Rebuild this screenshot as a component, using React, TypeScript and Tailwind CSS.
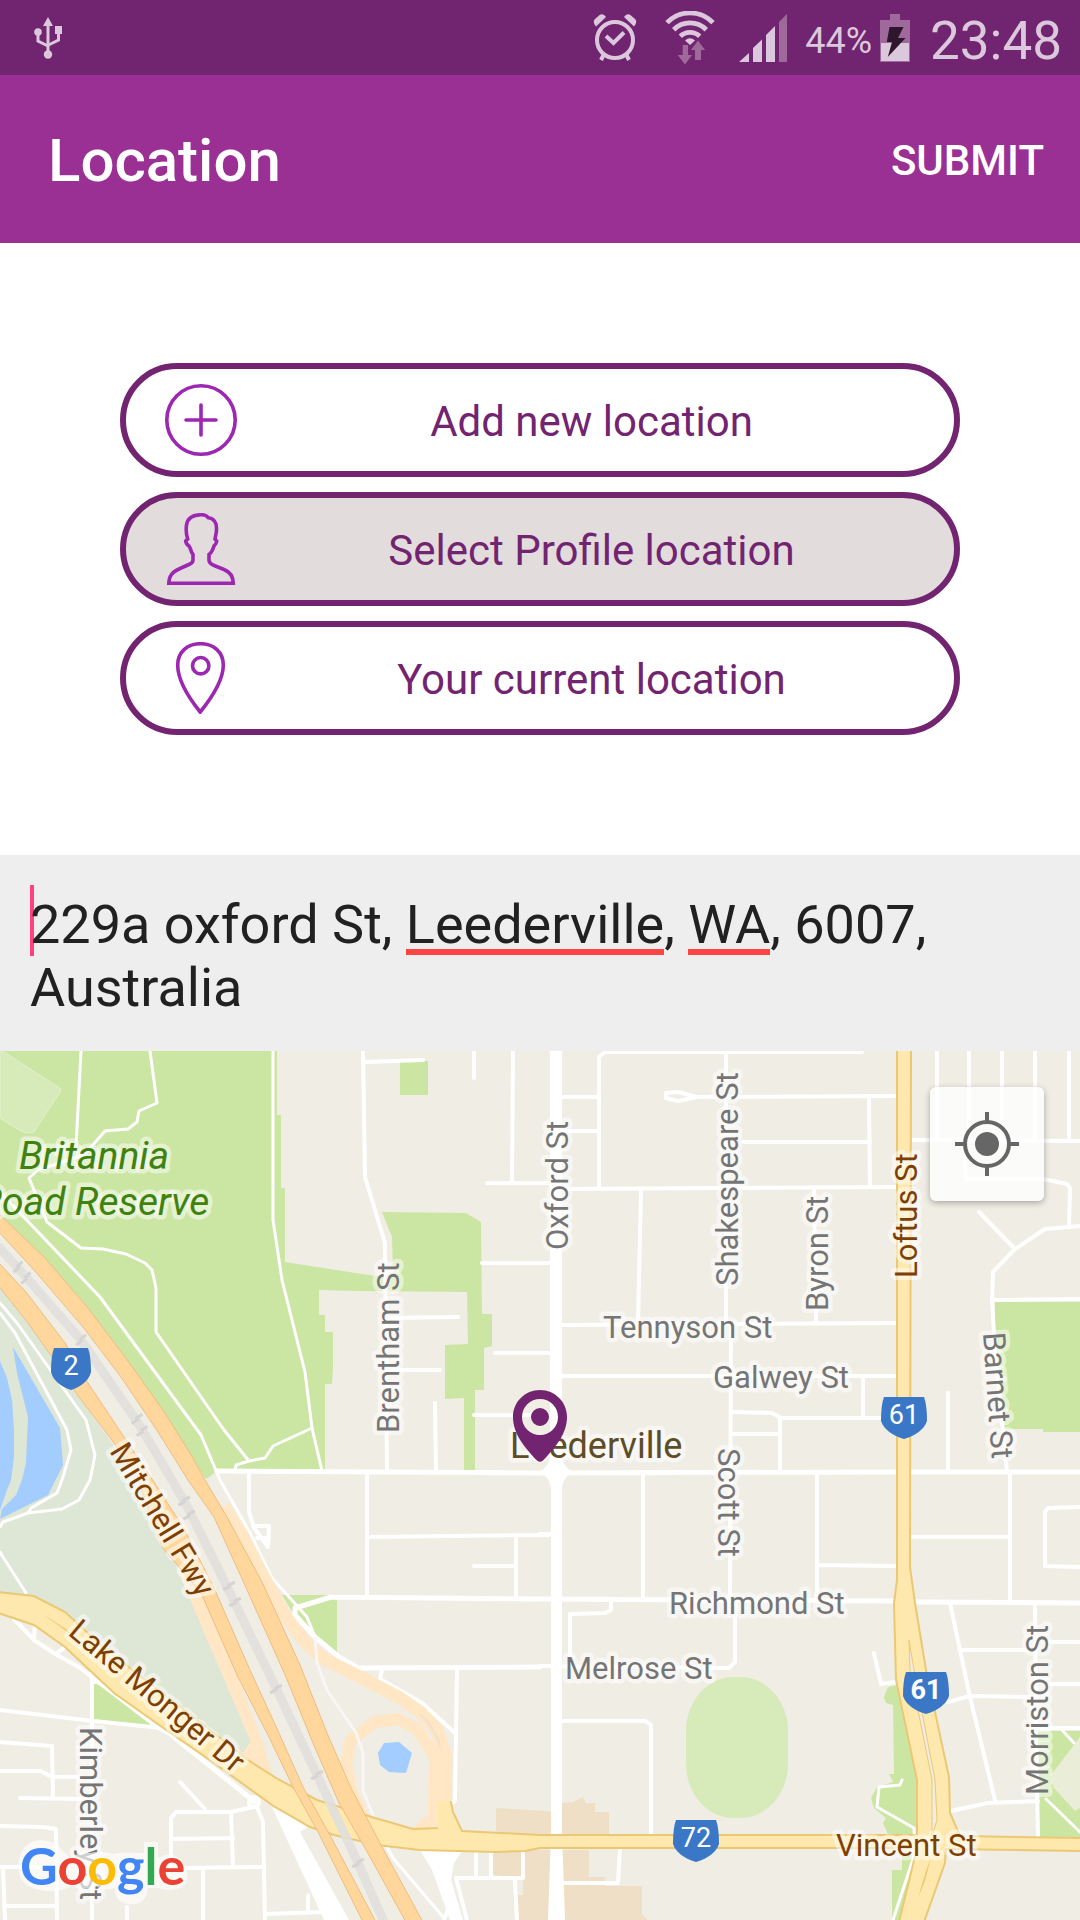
import React, { useLayoutEffect, useRef, useState } from "react";

const ADDRESS = "229a oxford St, Leederville, WA, 6007, Australia";

/* ---------- status bar ---------- */

function UsbIcon() {
  return (
    <svg width="28" height="42" viewBox="0 0 28 42" fill="currentColor" aria-hidden="true">
      <path d="M14 0l5 9h-3.500v26h-3V9H9z" />
      <circle cx="14" cy="37.500" r="4.200" />
      <circle cx="4" cy="15" r="3.800" />
      <path d="M21 9h7v8h-7z" />
      <path d="M4 16v8l10 5M24.500 16v7l-10 5" fill="none" stroke="currentColor" strokeWidth="3" />
    </svg>
  );
}

function AlarmIcon() {
  return (
    <svg width="44" height="47" viewBox="0 0 44 47" fill="none" stroke="currentColor" aria-hidden="true">
      <circle cx="22" cy="26" r="18" strokeWidth="4" />
      <path d="M13 22l7.500 7L31 18.500" strokeWidth="4" />
      <path d="M11 40l-3 6M33 40l3 6" strokeWidth="4" />
      <path
        d="M3 12.500Q-1 8 2 5L6 1.500Q10-1.500 13 3zM41 12.500Q45 8 42 5L38 1.500Q34-1.500 31 3z"
        fill="currentColor"
        stroke="none"
      />
    </svg>
  );
}

function WifiIcon() {
  return (
    <svg width="50" height="54" viewBox="0 0 50 54" fill="none" stroke="currentColor" aria-hidden="true">
      <path d="M2 11.700A32 32 0 0 1 48 11.700" strokeWidth="4.800" />
      <path d="M8.700 18.700A23 23 0 0 1 41.300 18.700" strokeWidth="4.800" />
      <path d="M15.300 25.300A14 14 0 0 1 34.700 25.300" strokeWidth="4.800" />
      <path d="M25 34l-5-4.500Q25 25 30 29.500z" fill="currentColor" stroke="none" />
      <g fill="#a0699c" stroke="none">
        <path d="M17.700 34H23v10h4l-7 9.500L12.700 44h5z" />
        <path d="M30 49V39h-4l7-9.500L40 39h-4v10z" />
      </g>
    </svg>
  );
}

function SignalIcon() {
  return (
    <svg width="48" height="48" viewBox="0 0 48 48" fill="currentColor" aria-hidden="true">
      <path d="M0 48l10-9v9zM14 34l9-8.500V48h-9zM27 21l9-9v36h-9z" />
      <path d="M40 8l8-8v48h-8z" fill="#a0699c" />
    </svg>
  );
}

function BatteryIcon() {
  return (
    <svg width="30" height="48" viewBox="0 0 30 48" aria-hidden="true">
      <path d="M10 0h10v6h10v42H0V6h10z" fill="#a0699c" />
      <path d="M1 29h28v18H1z" fill="#dcc8dc" />
      <path d="M9.500 13h14L18 24h7.500L7.800 43 12 28H6.800z" fill="#2e162d" />
    </svg>
  );
}

function StatusBar() {
  return (
    <div className="flex h-[75px] items-center bg-[#71246f] pl-[34px] pr-[18px] text-[#dcc8dc]">
      <UsbIcon />
      <div className="ml-auto flex items-center">
        <AlarmIcon />
        <span className="ml-7">
          <WifiIcon />
        </span>
        <span className="ml-6">
          <SignalIcon />
        </span>
        <span className="ml-[18px] pt-1.5 text-[36px] leading-none">44%</span>
        <span className="ml-2">
          <BatteryIcon />
        </span>
        <span className="ml-5 pt-2 text-[53px] leading-none">23:48</span>
      </div>
    </div>
  );
}

/* ---------- location choices ---------- */

function PlusIcon() {
  return (
    <>
      <circle cx="36" cy="36" r="34.200" />
      <path d="M36 21v30M21 36h30" />
    </>
  );
}

function PersonIcon() {
  return (
    <path
      strokeLinejoin="miter"
      d="M3.800 70.300C4 63 7 59 15 55.500L25 51Q28 49.500 28 47V41.500Q26.500 40 25.500 36L24 33Q21 31 20.700 28L22.700 26Q20.500 20 21.500 12Q23 2 36 1.700Q41 1.500 43.500 4.800Q49 5.500 51 11Q52 16 51 21L50 26L51.700 28Q51.500 31 49 33L47.500 37Q46 40 44 41.500V47Q44 50 48 52L59 56.500Q68 60 68.300 70.300Z"
    />
  );
}

function PinOutlineIcon() {
  return (
    <>
      <path d="M35.500 1.700C49 1.700 58.300 10.500 58.300 23C58.300 36 49 53 35.200 70C21.500 53 12.700 36 12.700 23C12.700 10.500 22 1.700 35.500 1.700Z" />
      <circle cx="35.700" cy="23.700" r="8.200" />
    </>
  );
}

const CHOICES = [
  { id: "new", label: "Add new location", Icon: PlusIcon },
  { id: "profile", label: "Select Profile location", Icon: PersonIcon },
  { id: "current", label: "Your current location", Icon: PinOutlineIcon },
];

function Choices() {
  const [selected, setSelected] = useState("profile");
  return (
    <div className="flex flex-col gap-[15px] bg-white p-[120px]">
      {CHOICES.map(({ id, label, Icon }) => (
        <button
          key={id}
          type="button"
          aria-pressed={selected === id}
          onClick={() => setSelected(id)}
          className="flex h-[114px] w-full items-center rounded-full border-6 border-[#732471] bg-white pl-[39px] pr-2 text-[42px] leading-none text-[#732471] aria-pressed:bg-[#e2dcdc]"
        >
          <svg
            width="72"
            height="72"
            viewBox="0 0 72 72"
            fill="none"
            stroke="#9c27b0"
            strokeWidth="3.600"
            strokeLinecap="round"
            aria-hidden="true"
          >
            <Icon />
          </svg>
          <span className="flex-1 pt-1">{label}</span>
        </button>
      ))}
    </div>
  );
}

/* ---------- address field ---------- */

const UNKNOWN_WORDS = ["Leederville", "WA"];

type Mark = { left: number; width: number };

/* Finds where the unknown words of the first line lie, from the field's own font. */
function measureMarks(field: HTMLTextAreaElement, value: string): Mark[] {
  const context = document.createElement("canvas").getContext("2d");
  if (!context) return [];
  const style = getComputedStyle(field);
  context.font = `${style.fontSize} ${style.fontFamily}`;
  return UNKNOWN_WORDS.flatMap((word) => {
    const at = value.indexOf(word);
    if (at < 0) return [];
    const left = context.measureText(value.slice(0, at)).width;
    const width = context.measureText(word).width;
    return left + width <= field.clientWidth ? [{ left, width }] : [];
  });
}

function AddressField() {
  const [value, setValue] = useState(ADDRESS);
  const [marks, setMarks] = useState<Mark[]>([]);
  const field = useRef<HTMLTextAreaElement>(null);

  useLayoutEffect(() => {
    if (field.current) setMarks(measureMarks(field.current, value));
  }, [value]);

  return (
    <div className="bg-[#eeeeee] px-[30px] pb-8 pt-[38px]">
      <div className="relative">
        <span className="absolute -top-2 left-0 h-[71px] w-1 bg-[#ff4081]" />
        {marks.map((mark) => (
          <span
            key={mark.left}
            className="absolute top-14 h-1.5 bg-[#ff4444]"
            style={{ left: mark.left, width: mark.width }}
          />
        ))}
        <textarea
          ref={field}
          aria-label="Address"
          rows={2}
          spellCheck={false}
          value={value}
          onChange={(e) => setValue(e.target.value)}
          className="relative block w-full resize-none overflow-hidden bg-transparent p-0 text-[54px] leading-[63px] text-[#212121] caret-[#ff4081] outline-none"
        />
      </div>
    </div>
  );
}

/* ---------- map ---------- */

const MINOR_STREETS = [
  "M363 0L365 126L385 192L387 421M365 11L423 9M474 0V27M513 0L512 132M487 132H556M482 212H556",
  "M387 267L458 266M387 319H440M435 352L436 421M495 302H556M474 364H556",
  "M599 136V6L605 1H862M562 46H599M562 80H599M726 0V272M731 272L730 547L735 549V611L729 617L540 615",
  "M697 46L678 41L666 42V47L678 50ZM697 46L897 45M743 91H870M869 48L870 136M540 132H556M562 138L897 136",
  "M641 139L638 274M814 137L816 272M562 274L897 272M562 325H897M863 326V366",
  "M731 361L772 362L781 367H881M780 367V421M731 383H780",
  "M937 0V89M969 0V89M1002 0V89M1035 0V89M1069 0V89M910 89L1080 90",
  "M963 89L966 128H1043L1067 133L1070 137L1069 175M979 161L1015 198M1080 175L1045 178L1015 198L993 221L992 249L995 300L1007 421M993 249L1080 248M948 342V421",
  "M643 422V547M817 422V547M817 514L896 515M910 486H1009M1010 422V551M1080 456L1048 457L1045 461V515L1080 516M540 483H552",
  "M611 548V559L605 562L570 563V615M950 552L970 646L995 749M962 599H1035M1035 552L1036 677L1038 786M1050 591H1080M1050 633H1080M1036 677H1080",
  "M948 651L970 645L1035 646M951 760L988 752L1038 750M874 602L881 633L896 631M562 670H645L651 674V783M620 797L618 832H565",
  "M249 422V461L254 477L268 496L269 475H254M257 487H269M367 422V545M369 486L540 484M516 486V547M474 515H516M540 484H552",
  "M14 568L34 589L57 604L79 616L93 627L157 676M35 574L34 587M57 602L64 597M92 621V869M0 659L93 670L162 677M92 631H106",
  "M0 691L52 695L53 747M0 720H41L52 726H79M20 747L84 748M0 775L43 776L56 778L57 869M0 816H57M3 816L5 869M4 855H57M127 856V869",
  "M180 731L205 758M253 756L231 761H176L171 767V817M257 756L263 771L265 869M231 761L233 816M171 788L233 787M183 817L263 816M203 819V869M265 863L324 861M308 844V862",
  "M456 827H523V801M476 801V827M491 801V827M515 829L517 869M456 827L467 869M444 869L451 850M457 617L455 749L452 752M382 619L380 628L422 652L455 682",
];

const MAIN_STREETS = [
  "M217 420L540 422L897 421M910 421H1080M540 548L893 550M915 551L1080 552",
  "M331 546L540 548M331 546L305 554L295 557V564L315 586L339 606L358 617L540 616M157 676L169 682L255 751",
];

const PATHS = [
  "M81 0L76 96M150 0L157 52L139 60L137 71L128 78L105 80L84 104L38 119L29 127L47 171L81 197L103 198L126 203L145 212L152 219L156 237V281L224 379L249 410L265 407L273 395L312 377M235 420L236 414L249 410",
  "M0 141L100 246L201 384L220 429L250 482L272 527L307 566L315 586M273 0V169L282 229L305 321L312 377L322 420",
  "M0 252L17 272L86 369L95 404L90 429L79 449L62 458L28 462L3 471L0 476M0 262L15 282L67 379L71 399L62 429L57 442L31 457L28 462M0 501L3 506L26 542",
  "M387 796L393 807L444 867M902 729L900 734L879 736L877 756L914 777L915 802L893 869M1062 679L1074 692M1046 748L1080 781",
];

const WEST_LANES =
  "M-2 211L26 241L65 292L86 329L114 371L152 428L183 476L214 537L250 619L279 682L303 736L331 786L376 871H363L317 779L293 736L269 686L238 626L201 542L162 496L138 429L114 392L79 346L52 306L28 272L-2 234Z";
const EAST_LANES =
  "M-2 162L45 207L88 257L131 314L165 362L193 407L205 429L227 466L262 531L300 614L327 682L351 737L382 796L423 871H406L365 797L339 752L313 692L286 626L248 541L214 466L188 429L158 381L121 326L83 276L34 219L-2 180Z";
const LAKE_MONGER =
  "M-2 541L34 545L65 561L103 596L162 642L214 682L248 709L276 727L317 749L375 767L413 778L439 777V751H451L453 761L462 780L540 784H918V797H540L525 800L496 801L420 799L377 794L334 784L310 776L272 754L214 712L162 676L114 642L65 596L34 574L-2 562Z";
const LOFTUS =
  "M897 -2H911L910 516L915 552L926 619L949 726L950 762L960 785L1082 787V800L946 798L945 812L924 871H899L917 797V729L896 629L894 552L897 529Z";

type Label = { text: string; x: number; y: number; turn?: number };

const STREET_LABELS: Label[] = [
  { text: "Tennyson St", x: 603, y: 287 },
  { text: "Galwey St", x: 713, y: 337 },
  { text: "Richmond St", x: 669, y: 563 },
  { text: "Melrose St", x: 565, y: 628 },
  { text: "Oxford St", x: 568, y: 199, turn: -90 },
  { text: "Shakespeare St", x: 738, y: 235, turn: -90 },
  { text: "Byron St", x: 828, y: 260, turn: -90 },
  { text: "Brentham St", x: 399, y: 382, turn: -90 },
  { text: "Morriston St", x: 1048, y: 744, turn: -90 },
  { text: "Scott St", x: 718, y: 397, turn: 90 },
  { text: "Kimberley St", x: 80, y: 676, turn: 90 },
  { text: "Barnet St", x: 983, y: 282, turn: 86 },
];

const ROUTE_LABELS: Label[] = [
  { text: "Vincent St", x: 836, y: 805 },
  { text: "Loftus St", x: 917, y: 227, turn: -90 },
  { text: "Mitchell Fwy", x: 109, y: 400, turn: 59 },
  { text: "Lake Monger Dr", x: 67, y: 583, turn: 40 },
];

const SHIELDS = [
  { text: "2", x: 71, y: 297, half: 20, bold: false },
  { text: "61", x: 904, y: 346, half: 23, bold: false },
  { text: "61", x: 926, y: 621, half: 23, bold: true },
  { text: "72", x: 696, y: 769, half: 23, bold: false },
];

const RAIL = "M-2 195L26 226L81 289L138 372L172 429L188 457L231 544L276 637L317 724L358 812L384 871";
const RAIL_TICKS = [
  [18, 216, 48],
  [26, 227, 48],
  [81, 289, 52],
  [137, 368, 57],
  [142, 380, 57],
  [184, 450, 62],
  [189, 464, 62],
  [229, 535, 64],
  [235, 551, 64],
  [276, 638, 65],
  [317, 724, 65],
  [358, 812, 65],
];

function MapLabel({ label }: { label: Label }) {
  return (
    <text transform={`translate(${label.x} ${label.y}) rotate(${label.turn ?? 0})`}>{label.text}</text>
  );
}

function MapDrawing() {
  return (
    <svg
      className="absolute inset-0 h-full w-full"
      viewBox="0 0 1080 869"
      preserveAspectRatio="xMidYMid slice"
      role="img"
      aria-label="Map of Leederville"
    >
      <rect width="1080" height="869" fill="#f0ede5" />

      <g fill="#cbe6a3">
        <path d="M0 0H277V64H281V137H285V211L375 225L393 224L392 186L382 161L466 162L481 171L482 263H492V295L484 297V339H475V420H464V347L445 348V294L468 293L467 241L357 240L319 239V264H325V281H333V316L332 333H325V420H217L206 428L165 370L88 262L0 170Z" />
        <path d="M400 10H428V44H400ZM995 251H1080V381H1043V378H1001L995 276Z" />
        <path d="M282 544H337V604L310 582L293 562ZM94 632L103 636L164 676L94 668Z" />
        <path d="M884 646L888 636L897 634L918 729V783H888L883 772L886 767L874 757L871 747L877 736L893 731L889 723H894L893 654L886 652ZM902 802H918L900 869H892V819H902Z" />
        <path d="M1038 680H1080V786H1038Z" />
      </g>
      <path
        d="M0 1H4L61 38L60 41L34 81L27 82L19 79L0 67Z"
        fill="#d6eaba"
        stroke="#e3f1cf"
      />
      <rect x="686" y="626" width="102" height="141" rx="48" ry="54" fill="#d6eaba" />
      <path d="M1080 686L1051 724L1053 736L1075 760L1080 757Z" fill="#eaedd8" />
      <path
        d="M0 234L28 272L79 346L138 429L170 500L251 691L243 702L162 645L65 561L31 544L0 541Z"
        fill="#dee6d6"
      />
      <g fill="#a3ccff">
        <path d="M0 310L7 327L12 349L14 379V406L11 429L7 439L0 459Z" />
        <path d="M13 296L60 377L63 414L48 444L0 468L2 458L16 444L22 429L26 412L28 366L17 322Z" />
        <path d="M378 702L384 692L399 691L412 702L406 722L389 721L380 714Z" />
      </g>
      <g fill="#f0dfc7">
        <path d="M496 757L562 761V752L573 751L583 746L586 752H595V761H609V785H496Z" />
        <path d="M493 799H589V826H605V835H642V864L648 869H518V844H523V827L493 824Z" />
      </g>

      <g fill="none" stroke="#fff" strokeLinejoin="round" strokeLinecap="round">
        <g strokeWidth="3">
          {PATHS.map((d) => (
            <path key={d} d={d} />
          ))}
        </g>
        <g strokeWidth="4">
          {MINOR_STREETS.map((d) => (
            <path key={d} d={d} />
          ))}
          <circle cx="254" cy="751" r="5" fill="#f0ede5" />
        </g>
        <g strokeWidth="5">
          {MAIN_STREETS.map((d) => (
            <path key={d} d={d} />
          ))}
        </g>
      </g>
      <g fill="#fff">
        <path d="M550 0H562V408Q564 415 572 421Q564 426 562 436V782L565 869H548L551 782V436Q549 426 540 421Q548 415 550 408Z" />
        <path d="M272 756L308 776L300 781L349 869H324ZM420 799H463L454 812L451 829L463 869H450L432 819Z" />
      </g>

      <g fill="none" stroke="#ffe6c5" strokeLinejoin="round">
        <path
          strokeWidth="13"
          d="M224 456L241 482L262 523L286 566L303 589L324 608L362 627L400 647L420 661L437 679L446 706L444 756L440 780"
        />
        <path strokeWidth="12" d="M372 775L363 766L351 739L346 712L351 689L375 671L398 668L417 678L435 706L434 766L416 782" />
      </g>
      <path d="M417 661L428 668L439 687L441 700L436 687L426 671Z" fill="#f3e2c9" />
      <path d="M172 502L189 546L251 691L243 702L262 735L274 729L263 692L207 545L180 490Z" fill="#ffe6c5" />
      <path
        d="M315 586L317 612L327 639L356 682L363 702V739L374 767"
        fill="none"
        stroke="#f8f7f5"
        strokeWidth="3"
      />

      <g strokeWidth="2">
        <path d={LAKE_MONGER} fill="#ffe8ad" stroke="#ebc873" />
        <path d={LOFTUS} fill="#ffe8ad" stroke="#ebc873" />
        <path d="M551 785H563V796H551ZM900 785H960L958 797H900ZM438 750H450V785H438Z" fill="#ffe8ad" />
        <path
          d="M909 589L914 619L935 729L937 769L932 785V729L910 619Z"
          fill="#f0ede5"
          stroke="#ebc873"
          strokeWidth="1"
        />
        <path d="M931 806L925 830L918 847L926 820Z" fill="#ebc873" />
        <path d="M42 563L66 578L72 584Z" fill="#ebc873" />
      </g>

      <path d={RAIL} fill="none" stroke="#e0dfdc" strokeWidth="9" opacity="0.9" />
      <g fill="none" stroke="#d5d4d2" strokeWidth="3">
        {RAIL_TICKS.map(([x, y, turn]) => (
          <path key={`${x}-${y}`} d="M-1 -7V1M1 -1V7" transform={`translate(${x} ${y}) rotate(${turn})`} />
        ))}
      </g>
      <g fill="#ffd79c" stroke="#ecbd80" strokeWidth="1">
        <path d={WEST_LANES} />
        <path d={EAST_LANES} />
      </g>

      <g
        fontFamily="Roboto"
        fontSize="31"
        strokeWidth="9"
        strokeLinejoin="round"
        stroke="rgba(255,255,255,0.5)"
        paintOrder="stroke"
      >
        <g fill="#757575">
          {STREET_LABELS.map((l) => (
            <MapLabel key={l.text} label={l} />
          ))}
        </g>
        <g fill="#7c3f04">
          {ROUTE_LABELS.map((l) => (
            <MapLabel key={l.text} label={l} />
          ))}
        </g>
        <text x="510" y="407" fontSize="36" fill="#5e4d27">
          Leederville
        </text>
        <g fill="#3f8210" fontSize="39" fontStyle="italic" textAnchor="middle">
          <text x="94" y="118">Britannia</text>
          <text x="94" y="164">Road Reserve</text>
        </g>
      </g>

      {SHIELDS.map((s) => (
        <g key={`${s.x}-${s.y}`} transform={`translate(${s.x} ${s.y})`}>
          <path
            fill="#3a78c7"
            d={
              s.half === 20
                ? "M-17 0H17Q20 8 20 24Q17 36 0 42Q-17 36 -20 24Q-20 8 -17 0Z"
                : "M-20 0H20Q23 8 23 24Q19 36 0 42Q-19 36 -23 24Q-23 8 -20 0Z"
            }
          />
          <text
            y="27"
            textAnchor="middle"
            fill="#fff"
            fontFamily="Roboto"
            fontSize="27"
            fontWeight={s.bold ? 700 : 400}
          >
            {s.text}
          </text>
        </g>
      ))}

      <path
        transform="translate(513 339)"
        fill="#732471"
        fillRule="evenodd"
        d="M27 0C12 0 0 12 0 27C0 44 12 58 24 70.500Q27 73 30 70.500C42 58 54 44 54 27C54 12 42 0 27 0ZM27 9A18 18 0 1 1 27 45A18 18 0 1 1 27 9ZM27 18A9 9 0 1 0 27 36A9 9 0 1 0 27 18Z"
      />
    </svg>
  );
}

function GoogleLogo() {
  return (
    <svg
      className="absolute bottom-1.5 left-3 h-[90px] w-[184px]"
      viewBox="0 0 184 90"
      role="img"
      aria-label="Google"
    >
      <g fill="#fff" opacity="0.65">
        <path d="M28 16Q42 16 50 26L58 34Q66 28 78 29Q92 26 100 30Q112 28 126 29H132V18H146V34Q164 24 173 42Q180 58 168 64Q158 68 146 64H136Q134 82 116 80Q102 78 103 64Q92 68 84 62Q72 68 60 62Q44 70 28 66Q6 62 6 42Q8 18 28 16Z" />
      </g>
      <text x="8" y="61" fontFamily="Lato" fontSize="52" fontWeight="700">
        <tspan fill="#4285f4">G</tspan>
        <tspan fill="#ea4335">o</tspan>
        <tspan fill="#fbbc05">o</tspan>
        <tspan fill="#4285f4">g</tspan>
        <tspan fill="#34a853">l</tspan>
        <tspan fill="#ea4335">e</tspan>
      </text>
    </svg>
  );
}

function MapPanel() {
  return (
    <div className="relative min-h-[600px] flex-1 overflow-hidden">
      <MapDrawing />
      <button
        type="button"
        aria-label="My location"
        className="absolute right-9 top-9 flex size-[114px] items-center justify-center rounded-md bg-white/75 shadow-[0_2px_6px_rgba(0,0,0,0.3)]"
      >
        <svg width="64" height="64" viewBox="0 0 64 64" fill="none" stroke="#666" strokeWidth="4" aria-hidden="true">
          <circle cx="32" cy="32" r="22" />
          <circle cx="32" cy="32" r="12" fill="#666" stroke="none" />
          <path d="M32 0v9M32 55v9M0 32h9M55 32h9" />
        </svg>
      </button>
      <GoogleLogo />
    </div>
  );
}

export default function App() {
  return (
    <div className="flex min-h-screen flex-col bg-white font-[Roboto,sans-serif]">
      <StatusBar />
      <header className="flex h-[168px] items-center justify-between bg-[#9a2f94] pl-12 pr-9 pt-1 text-white">
        <h1 className="text-[60px] leading-none font-medium">Location</h1>
        <button type="button" className="text-[42px] leading-none font-medium">
          SUBMIT
        </button>
      </header>
      <main className="flex flex-1 flex-col">
        <Choices />
        <AddressField />
        <MapPanel />
      </main>
    </div>
  );
}
